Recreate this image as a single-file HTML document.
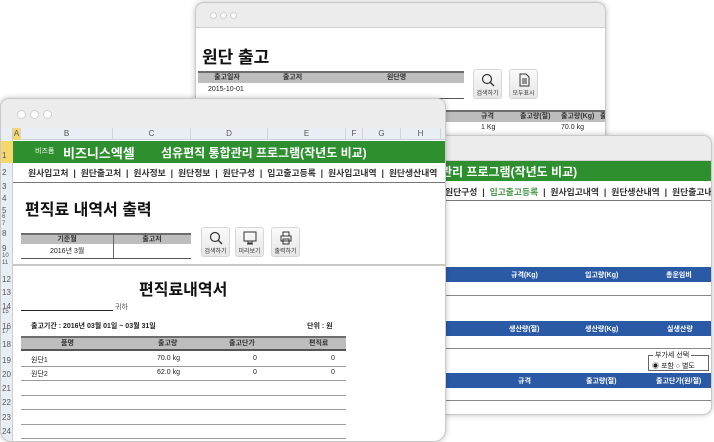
<!DOCTYPE html>
<html><head><meta charset="utf-8"><style>
*{margin:0;padding:0;box-sizing:border-box}
body{width:714px;height:442px;overflow:hidden;background:#fff;position:relative;font-family:"Liberation Sans","Noto Sans CJK KR",sans-serif;color:#222}
.a{position:absolute;white-space:nowrap}
.win{position:absolute;background:#fff;border:1px solid #c8c8c8;border-radius:9px;overflow:hidden;box-shadow:0 0 6px rgba(0,0,0,.25)}
.tb{position:absolute;left:0;right:0;top:0;background:#ececec;border-bottom:1px solid #d0d0d0}
.dot{position:absolute;width:7px;height:7px;border-radius:50%;border:1px solid #cfcfcf;background:#fff}
.gh{background:#bdbdbd;border-top:2px solid #6e6e6e;font-size:7px;font-weight:bold;text-align:center;color:#333}
.btn{position:absolute;width:29px;height:30px;border:1px solid #d6d6d6;border-radius:3px;background:linear-gradient(#fafafa,#e6e6e6);font-size:6px;text-align:center;color:#333}
.btn svg{display:block;margin:3px auto 1px}
.blue{position:absolute;left:0;right:0;height:15px;background:#2a5aa6;color:#fff;font-size:7px;font-weight:bold}
.ln{position:absolute;height:1px;background:#9a9a9a}
.rn{position:absolute;left:1px;font-size:8px;color:#555}
.ch{position:absolute;top:0;height:12px;font-size:8px;color:#555;text-align:center;border-right:1px solid #d4d4d4;line-height:12px}
.s{font-size:7px}
.menu{font-size:8.8px;font-weight:bold;color:#333}
</style></head><body>

<!-- back window -->
<div class="win" style="left:195px;top:2px;width:411px;height:150px">
 <div class="tb" style="height:25px"></div>
 <div class="dot" style="left:14px;top:9px"></div><div class="dot" style="left:24px;top:9px"></div><div class="dot" style="left:34px;top:9px"></div>
 <div class="a" style="left:6px;top:40px;font-size:17px;font-weight:bold;color:#111">원단 출고</div>
 <div class="a gh" style="left:2px;top:68px;width:266px;height:12px;line-height:10px"><span class="a" style="left:0;width:58px">출고일자</span><span class="a" style="left:58px;width:73px">출고저</span><span class="a" style="left:131px;width:135px">원단명</span></div>
 <div class="a s" style="left:12px;top:83px">2015-10-01</div>
 <div class="ln" style="left:2px;top:95px;width:266px;background:#555"></div>
 <div class="btn" style="left:277px;top:66px"><svg width="14" height="14"><circle cx="6" cy="6" r="4.5" fill="none" stroke="#333" stroke-width="1.2"/><line x1="9" y1="9" x2="13" y2="13" stroke="#333" stroke-width="1.3"/></svg>검색하기</div>
 <div class="btn" style="left:313px;top:66px"><svg width="14" height="14"><path d="M3 1h6l3 3v9H3z" fill="none" stroke="#333"/><path d="M5 6h5M5 8h5M5 10h5" stroke="#333"/></svg>모두표시</div>
 <div class="a gh" style="left:250px;top:107px;width:161px;height:12px;line-height:10px"><span class="a" style="left:35px">규격</span><span class="a" style="left:74px">출고량(절)</span><span class="a" style="left:115px">출고량(Kg)</span><span class="a" style="left:154px">출</span></div>
 <div class="a s" style="left:285px;top:121px">1 Kg</div><div class="a s" style="left:365px;top:121px">70.0 kg</div>
</div>

<!-- right window -->
<div class="win" style="left:420px;top:135px;width:292px;height:280px">
 <div class="tb" style="height:25px"></div>
 <div class="a" style="left:0;top:25px;width:292px;height:20px;background:#2e8f2e"></div>
 <div class="a" style="left:20px;top:27px;font-size:12px;color:#fff;font-weight:bold">관리 프로그램(작년도 비교)</div>
 <div class="a menu" style="left:24px;top:49px">원단구성 &nbsp;|&nbsp; <span style="color:#4a9a4a">입고출고등록</span> &nbsp;|&nbsp; 원사입고내역 &nbsp;|&nbsp; 원단생산내역 &nbsp;|&nbsp; 원단출고내</div>
 <div class="ln" style="left:0;top:64px;width:292px;background:#777"></div>
 <div class="blue" style="top:131px"><span class="a" style="left:90px;top:3px">규격(Kg)</span><span class="a" style="left:164px;top:3px">입고량(Kg)</span><span class="a" style="left:245px;top:3px">총운임비</span></div>
 <div class="ln" style="left:0;top:159px;width:292px;background:#888"></div>
 <div class="blue" style="top:185px"><span class="a" style="left:88px;top:3px">생산량(절)</span><span class="a" style="left:164px;top:3px">생산량(Kg)</span><span class="a" style="left:246px;top:3px">실생산량</span></div>
 <div class="ln" style="left:0;top:212px;width:292px;background:#888"></div>
 <div class="a" style="left:227px;top:219px;width:61px;height:16px;border:1px solid #666;font-size:7px"><span class="a" style="left:4px;top:-6px;background:#fff;padding:0 2px">부가세 선택</span><span class="a" style="left:3px;top:5px">◉ 포함 ○ 별도</span></div>
 <div class="blue" style="top:237px"><span class="a" style="left:97px;top:3px">규격</span><span class="a" style="left:165px;top:3px">출고량(절)</span><span class="a" style="left:235px;top:3px">출고단가(원/절)</span></div>
 <div class="ln" style="left:0;top:264px;width:292px;background:#888"></div>
</div>

<!-- front window -->
<div class="win" style="left:0;top:98px;width:446px;height:344px;border-radius:9px 9px 12px 12px">
 <div class="tb" style="height:29px;border-bottom:none"></div>
 <div class="dot" style="left:16px;top:11px;width:9px;height:9px"></div><div class="dot" style="left:29px;top:11px;width:9px;height:9px"></div><div class="dot" style="left:42px;top:11px;width:9px;height:9px"></div>
 <div class="a" style="left:0;top:29px;width:446px;height:12px;background:#e9eef4;border-bottom:1px solid #c8cfd8"></div>
 <div class="a" style="left:0;top:29px;width:12px;height:313px;background:#e9eef4;border-right:1px solid #c8cfd8"></div>
 <div style="position:absolute;left:0;top:29px">
  <div class="ch" style="left:12px;width:8px;background:#f5d76e">A</div>
  <div class="ch" style="left:20px;width:92px">B</div><div class="ch" style="left:112px;width:78px">C</div>
  <div class="ch" style="left:190px;width:77px">D</div><div class="ch" style="left:267px;width:78px">E</div>
  <div class="ch" style="left:345px;width:17px">F</div><div class="ch" style="left:362px;width:38px">G</div><div class="ch" style="left:400px;width:40px">H</div>
 </div>
 <div class="a" style="left:0;top:42px;width:12px;height:22px;background:#f5d76e"></div>
 <div class="rn" style="top:52px">1</div><div class="rn" style="top:69px">2</div><div class="rn" style="top:83px">3</div><div class="rn" style="top:95px">4</div><div class="rn" style="top:107px">5</div><div class="rn" style="top:115px;font-size:6px">6</div><div class="rn" style="top:122px;font-size:6px">7</div><div class="rn" style="top:130px">8</div><div class="rn" style="top:145px">9</div><div class="rn" style="top:154px;font-size:6px">10</div><div class="rn" style="top:161px;font-size:6px">11</div><div class="rn" style="top:176px">12</div><div class="rn" style="top:189px">13</div><div class="rn" style="top:203px">14</div><div class="rn" style="top:210px;font-size:6px">15</div><div class="rn" style="top:223px">16</div><div class="rn" style="top:230px;font-size:6px">17</div><div class="rn" style="top:241px">18</div><div class="rn" style="top:257px">19</div><div class="rn" style="top:271px">20</div><div class="rn" style="top:285px">21</div><div class="rn" style="top:299px">22</div><div class="rn" style="top:314px">23</div><div class="rn" style="top:328px">24</div>
 <div class="a" style="left:12px;top:42px;width:434px;height:22px;background:#2e8f2e"></div>
 <div class="a" style="left:34px;top:47px;font-size:7px;color:#fff">비즈폼</div>
 <div class="a" style="left:62px;top:44px;font-size:13px;color:#fff;font-weight:bold">비즈니스엑셀</div>
 <div class="a" style="left:160px;top:45px;font-size:12px;color:#fff;font-weight:bold">섬유편직 통합관리 프로그램(작년도 비교)</div>
 <div class="a menu" style="left:27px;top:67px">원사입고처 &nbsp;|&nbsp; 원단출고처 &nbsp;|&nbsp; 원사정보 &nbsp;|&nbsp; 원단정보 &nbsp;|&nbsp; 원단구성 &nbsp;|&nbsp; 입고출고등록 &nbsp;|&nbsp; 원사입고내역 &nbsp;|&nbsp; 원단생산내역</div>
 <div class="ln" style="left:12px;top:83px;width:434px;background:#777"></div>
 <div class="a" style="left:24px;top:97px;font-size:16px;font-weight:bold;color:#111">편직료 내역서 출력</div>
 <div class="a gh" style="left:20px;top:134px;width:170px;height:11px;line-height:9px"><span class="a" style="left:0;width:92px">기준월</span><span class="a" style="left:92px;width:78px">출고저</span></div>
 <div class="a" style="left:112px;top:134px;width:1px;height:26px;background:#666"></div>
 <div class="a s" style="left:49px;top:147px">2016년 3월</div>
 <div class="ln" style="left:20px;top:159px;width:170px;background:#555"></div>
 <div class="btn" style="left:200px;top:128px"><svg width="14" height="14"><circle cx="6" cy="6" r="4.5" fill="none" stroke="#333" stroke-width="1.2"/><line x1="9" y1="9" x2="13" y2="13" stroke="#333" stroke-width="1.3"/></svg>검색하기</div>
 <div class="btn" style="left:234px;top:128px"><svg width="14" height="14"><rect x="1" y="1" width="12" height="9" fill="none" stroke="#333"/><path d="M5 10v2h4v-2M4 13h6" fill="none" stroke="#333"/></svg>미리보기</div>
 <div class="btn" style="left:270px;top:128px"><svg width="14" height="14"><path d="M4 5V1h6v4M2 5h10v5H2zM4 8h6v5H4z" fill="#f4f4f4" stroke="#333"/></svg>출력하기</div>
 <div class="a" style="left:12px;top:165px;width:434px;height:2px;background:#c8c8c8"></div>
 <div class="a" style="left:138px;top:177px;font-size:16px;font-weight:bold;color:#111">편직료내역서</div>
 <div class="a" style="left:20px;top:211px;width:92px;height:1px;background:#222"></div>
 <div class="a s" style="left:114px;top:203px;color:#555">귀하</div>
 <div class="a s" style="left:30px;top:222px;font-weight:bold">출고기간 : 2016년 03월 01일 ~ 03월 31일</div>
 <div class="a s" style="left:306px;top:222px;font-weight:bold">단위 : 원</div>
 <div class="a gh" style="left:20px;top:237px;width:325px;height:15px;line-height:11px;border-bottom:2px solid #555"><span class="a" style="left:40px">품명</span><span class="a" style="left:137px">출고량</span><span class="a" style="left:208px">출고단가</span><span class="a" style="left:288px">편직료</span></div>
 <div class="a s" style="left:30px;top:256px">원단1</div><div class="a s" style="left:156px;top:256px">70.0 kg</div><div class="a s" style="left:252px;top:256px">0</div><div class="a s" style="left:330px;top:256px">0</div>
 <div class="a s" style="left:30px;top:270px">원단2</div><div class="a s" style="left:156px;top:270px">62.0 kg</div><div class="a s" style="left:252px;top:270px">0</div><div class="a s" style="left:330px;top:270px">0</div>
 <div class="ln" style="left:20px;top:267px;width:325px"></div>
 <div class="ln" style="left:20px;top:281px;width:325px"></div>
 <div class="ln" style="left:20px;top:296px;width:325px"></div>
 <div class="ln" style="left:20px;top:310px;width:325px"></div>
 <div class="ln" style="left:20px;top:325px;width:325px"></div>
 <div class="ln" style="left:20px;top:339px;width:325px"></div>
</div>
</body></html>
